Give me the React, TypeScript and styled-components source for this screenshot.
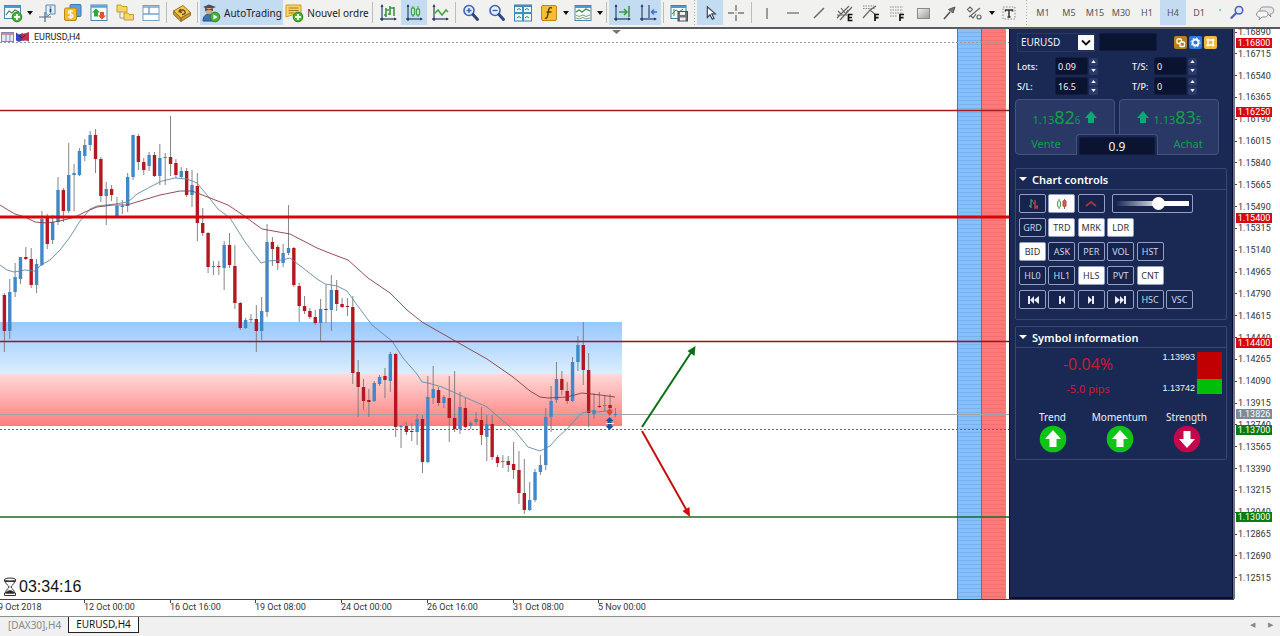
import React from "react";
import styled, { createGlobalStyle, css } from "styled-components";

const UI = '"Noto Sans", "Open Sans", sans-serif';
const SCALE = 'Roboto, "Liberation Sans", sans-serif';

const Global = createGlobalStyle`
  * { box-sizing: border-box; }
  body { margin: 0; background: #f0f0f0; font-family: ${UI}; color: #1c1c1c; }
  button, input, select { font-family: inherit; margin: 0; }
`;

/* ---------- market data ---------- */

type Candle = [kind: "u" | "d", high: number, top: number, bottom: number, low: number];

const CANDLES: Candle[] = [
  ["d", 293, 295, 331, 352], ["u", 279, 292, 331, 339], ["u", 263, 277, 292, 297], ["u", 257, 257, 279, 284],
  ["d", 247, 257, 259, 260], ["d", 248, 259, 285, 288], ["u", 259, 264, 285, 293], ["u", 211, 219, 265, 266],
  ["d", 214, 217, 244, 249], ["u", 215, 222, 240, 244], ["u", 177, 190, 222, 225], ["d", 188, 190, 211, 222],
  ["u", 143, 175, 211, 213], ["u", 164, 173, 175, 211], ["u", 148, 151, 175, 176], ["u", 139, 145, 156, 161],
  ["u", 131, 135, 145, 151], ["d", 129, 135, 159, 173], ["d", 157, 159, 196, 202], ["u", 182, 189, 196, 225],
  ["d", 185, 189, 195, 201], ["u", 197, 206, 216, 217], ["u", 200, 206, 207, 214], ["u", 173, 177, 206, 212],
  ["u", 135, 135, 177, 180], ["d", 134, 136, 162, 170], ["d", 158, 162, 170, 175], ["u", 152, 155, 166, 171],
  ["d", 152, 155, 176, 177], ["u", 144, 158, 176, 185], ["u", 153, 157, 158, 185], ["d", 116, 157, 164, 176],
  ["d", 159, 163, 175, 178], ["u", 167, 171, 177, 178], ["d", 168, 171, 195, 197], ["u", 170, 185, 195, 207],
  ["d", 173, 186, 223, 241], ["d", 208, 223, 233, 236], ["d", 232, 233, 267, 273], ["u", 261, 266, 267, 275],
  ["d", 261, 266, 267, 275], ["u", 241, 245, 268, 290], ["d", 233, 245, 265, 268], ["d", 245, 266, 303, 309],
  ["d", 302, 303, 328, 330], ["u", 318, 320, 328, 329], ["u", 314, 319, 320, 323], ["d", 305, 319, 331, 352],
  ["u", 297, 311, 331, 340], ["u", 224, 242, 312, 317], ["d", 237, 242, 249, 266], ["d", 245, 247, 263, 270],
  ["u", 244, 253, 263, 267], ["u", 205, 248, 253, 255], ["d", 247, 248, 285, 287], ["d", 283, 286, 306, 322],
  ["d", 296, 306, 311, 314], ["d", 308, 311, 317, 319], ["d", 310, 317, 323, 325], ["u", 299, 309, 323, 342],
  ["d", 285, 309, 310, 323], ["u", 275, 290, 310, 331], ["d", 280, 290, 304, 311], ["d", 298, 304, 307, 308],
  ["d", 298, 306, 307, 316], ["d", 296, 307, 373, 384], ["d", 360, 372, 387, 417], ["d", 379, 387, 401, 410],
  ["d", 389, 400, 402, 417], ["u", 381, 383, 401, 402], ["u", 375, 377, 384, 386], ["d", 368, 376, 380, 398],
  ["u", 352, 354, 381, 392], ["d", 353, 354, 427, 437], ["u", 425, 426, 427, 448], ["d", 422, 426, 432, 435],
  ["d", 423, 431, 432, 441], ["u", 414, 419, 432, 445], ["d", 415, 419, 462, 473], ["u", 376, 397, 462, 463],
  ["u", 366, 389, 398, 404], ["d", 387, 390, 403, 406], ["u", 395, 397, 403, 408], ["d", 376, 398, 418, 442],
  ["d", 371, 418, 429, 432], ["u", 392, 407, 429, 434], ["d", 398, 408, 427, 428], ["u", 421, 423, 426, 429],
  ["u", 412, 419, 422, 425], ["d", 407, 420, 435, 445], ["u", 415, 424, 437, 461], ["d", 415, 424, 457, 460],
  ["d", 455, 457, 463, 467], ["u", 455, 461, 462, 468], ["d", 456, 461, 465, 472], ["d", 442, 464, 470, 479],
  ["d", 451, 470, 493, 504], ["d", 459, 493, 510, 514], ["u", 482, 500, 510, 511], ["u", 469, 472, 500, 502],
  ["u", 455, 465, 472, 475], ["u", 408, 417, 465, 470], ["u", 386, 401, 417, 432], ["u", 362, 379, 400, 403],
  ["d", 371, 379, 390, 395], ["d", 382, 391, 401, 404], ["u", 357, 362, 401, 402], ["u", 336, 345, 362, 371],
  ["d", 322, 345, 370, 385], ["d", 353, 370, 413, 427], ["u", 393, 410, 414, 419], ["d", 392, 406, 407, 408],
  ["u", 395, 405, 406, 412], ["d", 394, 405, 408, 410], ["u", 408, 414, 415, 417],
];
const PITCH = 5.36;

const FAST_MA =
  "0,265 7,270 14,272 25,270 35,271 41,265 50,260 60,250 70,237 80,221 90,209 97,206 115,204 128,202 137,194 150,187 162,181 175,178 187,179 197,183 207,195 218,209 230,218 245,242 261,263 268,261 282,260 290,258 303,268 317,279 325,284 337,286 347,291 357,305 372,325 392,341 403,358 417,374 422,382 428,383 442,387 462,396 487,407 503,421 515,431 528,447 540,451 550,446 558,437 568,428 575,420 582,413 590,411 598,412 613,410";
const SLOW_MA =
  "0,205 8,210 15,214 25,217 35,222 47,223 60,221 75,217 85,212 97,207 113,205 127,205 140,201 160,195 180,191 192,191 205,196 228,205 240,213 262,229 290,234 317,248 332,254 348,260 368,278 390,293 407,310 422,322 457,342 487,359 513,377 530,391 540,397 548,398 567,397 582,393 600,395 615,397";

const TOP_PRICE = 1.1689;
const TICKS = Array.from({ length: 26 }, (_, i) => (TOP_PRICE - i * 0.00175).toFixed(5));
const LEVELS: { price: string; color: string }[] = [
  { price: "1.16800", color: "#d8090e" },
  { price: "1.16250", color: "#d8090e" },
  { price: "1.15400", color: "#d8090e" },
  { price: "1.14400", color: "#d8090e" },
  { price: "1.13826", color: "#7d8b99" },
  { price: "1.13700", color: "#087d0c" },
  { price: "1.13000", color: "#087d0c" },
];
const priceTop = (p: string) => Math.round(((TOP_PRICE - Number(p)) / 0.00175) * 21.84) - 2;
const TIMES = ["9 Oct 2018", "12 Oct 00:00", "16 Oct 16:00", "19 Oct 08:00", "24 Oct 00:00", "26 Oct 16:00", "31 Oct 08:00", "5 Nov 00:00"];

/* ---------- shell ---------- */

const Page = styled.div`
  min-height: 100vh;
  display: flex;
  flex-direction: column;
  background: #fff;
`;

const Toolbar = styled.header`
  display: flex;
  align-items: stretch;
  height: 29px;
  padding-bottom: 2px;
  background: #f1f1f0;
  border-bottom: 2px solid #5a5a60;
  white-space: nowrap;
  overflow: hidden;
`;

const ToolButton = styled.button<{ $active?: boolean; $wide?: number }>`
  flex: none;
  width: ${(p) => p.$wide ?? 26}px;
  display: flex;
  align-items: center;
  justify-content: center;
  gap: 3px;
  padding: 0;
  border: 0;
  font-size: 10px;
  color: #222;
  background: ${(p) => (p.$active ? "#c4dcf2" : "transparent")};
  svg { flex: none; display: block; }
`;

const PeriodButton = styled(ToolButton)`
  font-size: 9px;
  color: #555;
`;

const Caret = styled.button`
  flex: none;
  width: 8px;
  padding: 0;
  border: 0;
  background: none;
  display: flex;
  align-items: center;
  justify-content: center;
  &::after {
    content: "";
    border: 3px solid transparent;
    border-top: 4px solid #111;
    border-bottom: 0;
  }
`;

const Separator = styled.i`
  flex: none;
  width: 5px;
  margin: 2px 0;
  background: linear-gradient(#bcbcbc, #bcbcbc) center / 1px 100% no-repeat;
`;

const Grip = styled.i<{ $wide?: boolean }>`
  flex: none;
  width: ${(p) => (p.$wide ? 8 : 5)}px;
  background: repeating-linear-gradient(#aaa 0 1px, transparent 1px 3px) center / 1px 100% no-repeat;
`;

const ToolEnd = styled.div`
  display: flex;
  margin-left: auto;
`;

/* ---------- chart ---------- */

const Workspace = styled.main`
  display: flex;
  align-items: stretch;
`;

const Plot = styled.section`
  flex: 1;
  min-width: 0;
  position: relative;
  background: #fff;
`;

const PlotSvg = styled.svg`
  display: block;
  width: 100%;
  height: 570px;
`;

const Ladder = styled.rect<{ $end: number }>`
  x: calc(100% - ${(p) => p.$end}px);
`;

const ChartTitle = styled.div`
  position: absolute;
  top: 2px;
  left: 1px;
  display: flex;
  align-items: center;
  gap: 5px;
  font: 9px/12px ${SCALE};
`;

const Countdown = styled.time`
  position: absolute;
  left: 3px;
  bottom: 2px;
  display: flex;
  align-items: center;
  gap: 2px;
  font: 16px/18px "Liberation Sans", sans-serif;
  color: #111;
`;

const PriceScale = styled.aside`
  flex: none;
  width: 47px;
  position: relative;
  border-left: 2px solid #6d7489;
  font: 9px/10px ${SCALE};
  color: #333;
`;

const PriceList = styled.ul`
  list-style: none;
  margin: -2px 0 0;
  padding: 0 0 16px;
  height: calc(100% + 2px);
  display: flex;
  flex-direction: column;
  justify-content: space-between;
  li { display: flex; align-items: center; gap: 1px; }
  li::before { content: ""; width: 2px; height: 1px; background: #444; }
`;

const LevelTag = styled.span`
  position: absolute;
  left: 1px;
  width: 36px;
  height: 10px;
  text-align: center;
  color: #fff;
`;

const TimeScale = styled.div`
  height: 17px;
  margin-right: 46px;
  border-top: 1px solid #444;
  svg { display: block; width: 100%; height: 16px; }
  text { font: 9px ${SCALE}; fill: #333; }
`;

const TabBar = styled.nav`
  flex: 1;
  min-height: 20px;
  display: flex;
  align-items: flex-start;
  padding-left: 1px;
  background: #f0f0f1;
  border-top: 1px solid #8c8c8c;
`;

const Tab = styled.button<{ $active?: boolean }>`
  height: 16px;
  padding: 0 7px;
  border: 0;
  font-size: 10px;
  line-height: 15px;
  background: none;
  color: #8a8a8a;
  ${(p) =>
    p.$active &&
    css`
      background: #fff;
      color: #111;
      border: 1px solid #222;
      border-top: 0;
    `}
`;

const TabScroll = styled.div`
  margin-left: auto;
  display: flex;
  gap: 6px;
  padding: 2px 4px;
  button { border: 0; background: none; padding: 0; width: 12px; font-size: 7px; line-height: 12px; color: #888; }
`;

/* ---------- trade panel ---------- */

const Panel = styled.aside`
  flex: none;
  width: 224px;
  padding: 3px 5px 0;
  display: flex;
  flex-direction: column;
  background: #1a2854;
  border: 1px solid #060c33;
  border-top-width: 0;
  border-bottom-width: 2px;
  color: #eef1fa;
`;

const SymbolRow = styled.div`
  display: flex;
  align-items: center;
  gap: 4px;
  height: 20px;
  padding-left: 2px;
`;

const SymbolBox = styled.label`
  position: relative;
  width: 78px;
  height: 19px;
  border: 1px solid #2a3866;
  display: flex;
  svg { position: absolute; right: 0; top: 1px; pointer-events: none; }
`;

const SymbolSelect = styled.select`
  appearance: none;
  width: 100%;
  padding: 0 0 0 3px;
  border: 0;
  background: transparent;
  color: #f3f5fb;
  font-size: 10px;
`;

const DarkInput = styled.input<{ $w: number }>`
  width: ${(p) => p.$w}px;
  height: 18px;
  padding: 0 2px;
  border: 1px solid #111c40;
  border-radius: 2px;
  background: #0a1430;
  color: #f3f5fb;
  font-size: 9px;
`;

const QuickIcons = styled.div`
  display: flex;
  gap: 2px;
  margin-left: auto;
  margin-right: 10px;
  button { width: 13px; height: 13px; padding: 0; border: 0; background: none; }
  svg { display: block; }
`;

const Fields = styled.div`
  display: grid;
  grid-template-columns: 115px 1fr;
  grid-auto-rows: 20px;
  padding: 4px 0 0 2px;
`;

const Field = styled.label<{ $label: number }>`
  display: grid;
  grid-template-columns: ${(p) => p.$label}px 33px 11px;
  align-items: center;
  font-size: 9px;
  font-weight: 500;
`;

const Spin = styled.span`
  display: grid;
  gap: 1px;
  margin-left: 1px;
  button {
    height: 8px;
    width: 9px;
    padding: 0;
    border: 0;
    border-radius: 2px;
    background: #2c3a69;
    display: grid;
    place-items: center;
  }
  svg { display: block; }
`;

const Deal = styled.div`
  position: relative;
  display: flex;
  gap: 4px;
  margin-top: 3px;
`;

const DealButton = styled.button<{ $side: "left" | "right" }>`
  width: 100px;
  height: 56px;
  padding: 0;
  border: 1px solid #45547f;
  border-radius: 4px;
  background: #293865;
  color: #10a045;
  display: flex;
  flex-direction: column;
  text-align: center;
`;

const Quote = styled.span`
  height: 34px;
  width: 100%;
  display: flex;
  align-items: center;
  justify-content: center;
  gap: 3px;
  font-size: 11px;
  b { font-size: 18px; font-weight: 400; }
  small { font-size: 10px; }
`;

const DealName = styled.span<{ $side: "left" | "right" }>`
  width: 60px;
  font-size: 11px;
  line-height: 19px;
  margin-left: ${(p) => (p.$side === "left" ? 0 : 38)}px;
`;

const LotBox = styled.div`
  position: absolute;
  left: 61px;
  top: 35px;
  width: 82px;
  height: 21px;
  padding: 2px;
  border: 1px solid #45547f;
  border-bottom: 0;
  border-radius: 4px 4px 0 0;
  background: #1a2854;
  display: flex;
  input { width: 100%; text-align: center; font-size: 12px; }
`;

const Group = styled.section<{ $h: number; $gap: number }>`
  width: 212px;
  min-height: ${(p) => p.$h}px;
  margin-top: ${(p) => p.$gap}px;
  border: 1px solid #384876;
  border-radius: 2px;
`;

const GroupTitle = styled.h2`
  margin: 0;
  height: 21px;
  padding-left: 3px;
  border-bottom: 1px solid #384876;
  display: flex;
  align-items: center;
  gap: 5px;
  font-size: 11px;
  font-weight: 600;
  color: #fff;
  &::before {
    content: "";
    border: 4px solid transparent;
    border-top: 4px solid #fff;
    border-bottom: 0;
  }
`;

const Controls = styled.div`
  display: grid;
  grid-template-columns: repeat(6, 27px);
  grid-auto-rows: 19px;
  justify-content: space-between;
  row-gap: 5px;
  width: 180px;
  padding: 4px 3px;
`;

const Toggle = styled.button<{ $on?: boolean; $first?: boolean }>`
  ${(p) => p.$first && "grid-column-start: 1;"}
  display: grid;
  place-items: center;
  padding: 0;
  border: 1px solid #93a0c4;
  border-radius: 2px;
  font-size: 9px;
  background: ${(p) => (p.$on ? "#fdfdfe" : "#16234d")};
  color: ${(p) => (p.$on ? "#333" : "#cfd7ea")};
  svg { display: block; }
`;

const ZoomSlider = styled.label`
  grid-column: 4 / span 3;
  margin-left: 5px;
  border: 1px solid #93a0c4;
  border-radius: 2px;
  padding: 0 3px;
  display: flex;
  align-items: center;
  background: #16234d;
  input {
    appearance: none;
    width: 100%;
    height: 5px;
    background: linear-gradient(90deg, #1a2854, #fff 65%);
  }
  input::-webkit-slider-thumb {
    appearance: none;
    width: 13px;
    height: 13px;
    border-radius: 50%;
    background: #fff;
  }
`;

const Change = styled.div`
  display: flex;
  justify-content: space-between;
  padding: 4px 4px 0 0;
`;

const ChangeText = styled.div`
  width: 144px;
  display: grid;
  grid-template-rows: 24px 24px;
  align-items: center;
  text-align: center;
  color: #c61d35;
  font-size: 11px;
  strong { font-size: 16px; font-weight: 400; }
`;

const RangeBar = styled.div`
  display: flex;
  gap: 2px;
  height: 42px;
  font: 9px/11px "Liberation Sans", sans-serif;
  div { display: flex; flex-direction: column; justify-content: space-between; }
  i { width: 25px; background: linear-gradient(#c00000 65%, #00bd05 65%); }
`;

const Signals = styled.div`
  display: grid;
  grid-template-columns: repeat(3, 67px);
  padding: 10px 0 0 3px;
  font-size: 10px;
  line-height: 15px;
  div { display: grid; justify-items: center; }
  svg { display: block; }
`;

/* ---------- icons ---------- */

const Ico = ({ children, s = 20 }: { children: React.ReactNode; s?: number }) => (
  <svg width={s} height={s} viewBox="0 0 20 20" fill="none" aria-hidden="true">{children}</svg>
);
const Axes = () => (
  <g stroke="#4a5c82" strokeWidth="1.4" fill="#2b3e78">
    <path d="M4 2v16M2 16h16" />
    <path d="M4 1l-1.5 3h3zM19 16l-3-1.5v3z" stroke="none" />
    <circle cx="4" cy="16" r="1.2" stroke="none" />
  </g>
);
const Plus = ({ x = 14, y = 14 }) => (
  <g>
    <circle cx={x} cy={y} r="4.8" fill="#4bb436" stroke="#2e7f26" />
    <path d={`M${x - 3} ${y}h6M${x} ${y - 3}v6`} stroke="#fff" strokeWidth="1.8" />
  </g>
);
const Lens = ({ plus }: { plus: boolean }) => (
  <Ico>
    <circle cx="8" cy="7.500" r="5" fill="#e4f0fb" stroke="#3d63ae" strokeWidth="1.6" />
    <path d={plus ? "M5.500 7.500h5M8 5v5" : "M5.500 7.500h5"} stroke="#3d63ae" strokeWidth="1.4" />
    <path d="M12 11.500l4.500 5" stroke="#2c4684" strokeWidth="3" strokeLinecap="round" />
  </Ico>
);

const I = {
  newChart: (
    <Ico>
      <rect x="1.500" y="2.500" width="16" height="13" fill="#f4fafd" stroke="#4d86ad" />
      <path d="M1.500 4h16" stroke="#4d9ad0" strokeWidth="2" />
      <path d="M3 12l3-4 3 2 3-3 4 2" stroke="#4a8a4a" strokeWidth="1.2" />
      <Plus />
    </Ico>
  ),
  cross: (
    <Ico>
      <path d="M2 14h12M8 9v10" stroke="#56687c" strokeWidth="1.2" />
      <path d="M9 2h9v9h-5l-3 3v-3H9z" fill="#e6f1fb" stroke="#5286b8" />
      <path d="M13.500 5.500v4M13.500 3.500v1" stroke="#234f8a" strokeWidth="1.8" />
    </Ico>
  ),
  market: (
    <Ico>
      <rect x="7" y="1.500" width="11" height="12" rx="1" fill="#5f9fdb" stroke="#3d77b5" />
      <rect x="1.500" y="5" width="12" height="12.500" rx="1.500" fill="#f2bf2c" stroke="#bd8412" />
      <path d="M10 8.500c-2-1.500-5-1-4.500 1 .5 1.500 4 1.500 4.500 3 .3 2-3 2.500-5 1M7.600 7v9" stroke="#fff" strokeWidth="1.300" />
    </Ico>
  ),
  navigator: (
    <Ico>
      <rect x="2" y="2" width="16" height="15.500" fill="#f4fafd" stroke="#4d86ad" />
      <path d="M2 3.500h16" stroke="#5aa3d8" strokeWidth="2.500" />
      <path d="M7 5.500l4 4H9v4H5v-4H3z" fill="#2fa83a" />
      <path d="M13 16.500l4-4h-2V9h-4v3.500H9z" fill="#e2502a" />
    </Ico>
  ),
  folders: (
    <Ico>
      <path d="M5 8v7h5" stroke="#999" />
      <path d="M2 2h4l1 1.500h5V9H2zM9 10h4l1 1.500h4.500V17H9z" fill="#f6d566" stroke="#c79e2a" />
    </Ico>
  ),
  terminal: (
    <Ico>
      <rect x="2" y="2.500" width="16" height="15" fill="#fbfdff" stroke="#78a2cc" />
      <path d="M2 4h16M2 11h16M8 4v7" stroke="#78a2cc" strokeWidth="1.500" />
    </Ico>
  ),
  editor: (
    <Ico>
      <path d="M1.500 8L11 2.500l7.500 7L9 15z" fill="#f0c850" stroke="#96702a" />
      <path d="M1.500 8v3.500L9 18.500V15zM9 18.500l9.500-6v-3L9 15z" fill="#c99a34" stroke="#96702a" />
      <path d="M7 8.500c2-2 5-2 6 0s-1 3-3 3M8.500 6L7 8.500l3 1" stroke="#6a4a12" strokeWidth="1.400" />
    </Ico>
  ),
  auto: (
    <Ico>
      <path d="M2 18c0-5 3-7 6-7s6 2 6 7z" fill="#3c73b8" stroke="#284c80" />
      <circle cx="8" cy="7.500" r="3.800" fill="#d9a878" />
      <path d="M2 4l6-2.500L15 4 8 6.500zM4 5v3c2-1.500 6-1.500 8 0V5" fill="#4a4d54" />
      <circle cx="14" cy="14" r="4.800" fill="#4bb436" stroke="#2e7f26" />
      <path d="M12.500 11.500l4 2.500-4 2.500z" fill="#fff" />
    </Ico>
  ),
  order: (
    <Ico>
      <path d="M2 2h15v10H8l-6 2z" fill="#f7d664" stroke="#c99a26" />
      <path d="M4.500 5h10M4.500 7.500h10M4.500 10h6" stroke="#a67a1a" />
      <Plus />
    </Ico>
  ),
  bars: (
    <Ico><Axes /><path d="M8 5v9M6 12h2M8 7h3M12 3v9M10 11h2M12 5h4M16 4v9" stroke="#3a9a3a" strokeWidth="1.600" /></Ico>
  ),
  candles: (
    <Ico><Axes /><path d="M9 3v11M14 3v11" stroke="#3fa648" /><rect x="7.500" y="5" width="3" height="7" rx="1" fill="#d9f5da" stroke="#3fa648" strokeWidth="1.300" /><rect x="12.500" y="6" width="3" height="6" rx="1" fill="#d9f5da" stroke="#3fa648" strokeWidth="1.300" /></Ico>
  ),
  line: (<Ico><Axes /><path d="M4 11l4-4 4 5 4-5 2 2" stroke="#4aa63c" strokeWidth="1.600" /></Ico>),
  tile: (
    <Ico>
      <rect x="1.500" y="2" width="17" height="16" fill="#eaf6fc" stroke="#3f82ad" />
      <path d="M10 2v16M1.500 10h17M2 3h16" stroke="#3f8ec4" strokeWidth="2" />
      <path d="M4 7l2-1.500L8 7M12 7l2-1.500L16 7M4 15l2-1.500L8 15M12 15l2-1.500 2 1.500" stroke="#3b8c4c" />
    </Ico>
  ),
  fn: (
    <Ico>
      <rect x="2.500" y="2.500" width="15" height="15" rx="1.500" fill="#f5bf31" stroke="#c28516" />
      <path d="M13 5c-2-1-3 0-3.300 2L8.500 13c-.3 2-1.300 2.500-2.500 2M7.500 9h5" stroke="#5b3c05" strokeWidth="1.400" />
    </Ico>
  ),
  template: (
    <Ico>
      <rect x="2" y="2.500" width="16" height="15" fill="#f4faf8" stroke="#4d86ad" />
      <path d="M2 4h16" stroke="#4d9ad0" strokeWidth="2" />
      <path d="M3 9l3-2 3 2 4-3 4 2" stroke="#3b8c4c" strokeWidth="1.300" />
      <path d="M3 12l3 1.500L10 12l3 1.500L17 12M3 15l3 1 4-1.500 3 1.500 4-1" stroke="#7d9c84" />
    </Ico>
  ),
  scroll: (<Ico><Axes /><path d="M7 9h8M12 6l3 3-3 3M17 3v11" stroke="#3d9a4a" strokeWidth="1.600" /></Ico>),
  shift: (<Ico><Axes /><path d="M11 2v13" stroke="#4a5c82" strokeWidth="1.400" /><path d="M19 9h-5M16 6.500L13.500 9l2.500 2.500" stroke="#3f6fc0" strokeWidth="1.500" /></Ico>),
  save: (
    <Ico>
      <rect x="2" y="2.500" width="15" height="13" fill="#f4faf8" stroke="#3f82ad" />
      <path d="M2 4h15" stroke="#4d9ad0" strokeWidth="2" />
      <path d="M5 6v7M3 11l4-4 3 2 4-3" stroke="#3b8c4c" />
      <rect x="9" y="8.500" width="9.500" height="9.500" fill="#6f747a" stroke="#4c5055" />
      <path d="M11 9h5v3h-5zM11 14.500h5.500v3H11z" fill="#f0f0f0" />
    </Ico>
  ),
  cursor: (<Ico s={18}><path d="M7 3v12l3-3 2.500 5 2-1-2.500-5h4z" fill="#fff" stroke="#38435a" strokeWidth="1.300" /></Ico>),
  crosshair: (<Ico><path d="M2 10h6M12 10h6M10 2v6M10 12v6" stroke="#777" strokeWidth="1.400" /><path d="M9.500 10h1" stroke="#777" /></Ico>),
  vline: (<Ico><path d="M10 5v11" stroke="#777" strokeWidth="1.400" /></Ico>),
  hline: (<Ico><path d="M4 10h12" stroke="#777" strokeWidth="1.400" /></Ico>),
  trend: (<Ico><path d="M5 15L15 5" stroke="#666" strokeWidth="1.400" /></Ico>),
  equi: (
    <Ico>
      <path d="M2 15L14 3M5 17L17 4M3 8l3 3M6 5l4 5M9 13l4-6M2 12h10" stroke="#666" strokeWidth="1.200" />
      <path d="M17.500 11.500h-4v6h4M13.500 14.500h3.500" stroke="#111" strokeWidth="1.700" />
    </Ico>
  ),
  fan: (
    <Ico>
      <path d="M2 3h12M2 5.500h12" stroke="#888" strokeDasharray="1.500 1" />
      <path d="M2 15L9 7l6 5M9 7l6-4" stroke="#666" strokeWidth="1.200" />
      <path d="M18 11.500h-4v6.500M14 14.700h3.500" stroke="#111" strokeWidth="1.700" />
    </Ico>
  ),
  fibo: (
    <Ico>
      <path d="M3 4h13M3 7h13M3 10h13M3 13h7" stroke="#888" strokeDasharray="1.500 1" />
      <path d="M17 11.500h-4v6.500M13 14.700h3.500" stroke="#111" strokeWidth="1.700" />
    </Ico>
  ),
  rect: (
    <Ico>
      <defs><linearGradient id="shade" x2="1" y2="1"><stop stopColor="#f2f2f2" /><stop offset="1" stopColor="#999" /></linearGradient></defs>
      <rect x="4.500" y="5.500" width="12" height="10" fill="url(#shade)" stroke="#8a8a8a" />
    </Ico>
  ),
  arrow: (<Ico><path d="M5 16l6-7" stroke="#555" strokeWidth="1.600" /><path d="M16 4l-2 6-4.500-3.500z" fill="#777" stroke="#555" /></Ico>),
  symbols: (<Ico><path d="M4 14L15 5M5 4l2.500 2.500L5 9 2.500 6.500zM6 13l2 2 3-4" stroke="#666" strokeWidth="1.200" /><circle cx="14" cy="14" r="2" stroke="#666" strokeWidth="1.200" /></Ico>),
  text: (
    <Ico>
      <rect x="4" y="4" width="12" height="12" stroke="#888" strokeDasharray="1.500 1.500" />
      <path d="M6.500 8.500V7h7v1.500M10 7v7M8.500 14h3" stroke="#333" strokeWidth="1.500" />
    </Ico>
  ),
  search: (<Ico s={15}><circle cx="12" cy="7" r="5" fill="#dfe8f8" stroke="#4a5fc0" strokeWidth="2" /><path d="M8 11l-6 6" stroke="#4a5fc0" strokeWidth="3" strokeLinecap="round" /></Ico>),
  chat: (
    <Ico>
      <path d="M8 4h7c5 0 5 7 0 7l1 3-3-3H8c-4 0-4-7 0-7z" fill="#e9e9e9" stroke="#8d939c" />
      <path d="M5 8h5c4 0 4 6 0 6H7l-3 3 .5-3C0 14 1 8 5 8z" fill="#f6f6f6" stroke="#8d939c" />
    </Ico>
  ),
};

const TealUp = () => (
  <svg width="14" height="14" viewBox="0 0 14 14"><path d="M7 1l6 7h-3v5H4V8H1z" fill="#10a574" /></svg>
);
const Signal = ({ down }: { down?: boolean }) => (
  <svg width="28" height="28" viewBox="0 0 28 28">
    <circle cx="14" cy="14" r="13.300" fill={down ? "#c4064b" : "#0fc414"} />
    <path transform={down ? "rotate(180 14 14)" : undefined} d="M14 5l8 9h-4.500v8h-7v-8H6z" fill="#fff" />
  </svg>
);
const Step = ({ d }: { d: string }) => (
  <svg width="16" height="12" viewBox="0 0 16 12"><path d={d} fill="#e8ecf7" /></svg>
);
const Nub = ({ down }: { down?: boolean }) => (
  <svg width="5" height="3" viewBox="0 0 6 4"><path d={down ? "M0 0h6L3 4z" : "M0 4h6L3 0z"} fill="#eef1fa" /></svg>
);

const Tool = ({ icon, label, active }: { icon: React.ReactNode; label: string; active?: boolean }) => (
  <ToolButton type="button" aria-label={label} $active={active}>{icon}</ToolButton>
);

const NumberField = ({ label, value, w }: { label: string; value: string; w: number }) => (
  <Field $label={w}>
    {label}
    <DarkInput $w={33} defaultValue={value} />
    <Spin>
      <button type="button" aria-label={`${label} up`}><Nub /></button>
      <button type="button" aria-label={`${label} down`}><Nub down /></button>
    </Spin>
  </Field>
);

const TOGGLES: { t: string; on?: boolean; first?: boolean }[] = [
  { t: "GRD", first: true }, { t: "TRD", on: true }, { t: "MRK", on: true }, { t: "LDR", on: true },
  { t: "BID", on: true, first: true }, { t: "ASK" }, { t: "PER" }, { t: "VOL" }, { t: "HST" },
  { t: "HL0", first: true }, { t: "HL1" }, { t: "HLS", on: true }, { t: "PVT" }, { t: "CNT", on: true },
];

const TopBar = () => (
  <Toolbar>
    <Tool icon={I.newChart} label="New chart" /><Caret aria-label="Chart list" />
    <Tool icon={I.cross} label="Data window" />
    <Tool icon={I.market} label="Market watch" />
    <Tool icon={I.navigator} label="Trade" />
    <Tool icon={I.folders} label="Navigator" />
    <Tool icon={I.terminal} label="Terminal" />
    <Separator />
    <Tool icon={I.editor} label="Editor" />
    <Separator />
    <ToolButton type="button" $active $wide={83}>{I.auto}AutoTrading</ToolButton>
    <ToolButton type="button" $wide={87}>{I.order}Nouvel ordre</ToolButton>
    <Separator />
    <Tool icon={I.bars} label="Bar chart" />
    <Tool icon={I.candles} label="Candlesticks" active />
    <Tool icon={I.line} label="Line chart" />
    <Separator />
    <Tool icon={<Lens plus />} label="Zoom in" />
    <Tool icon={<Lens plus={false} />} label="Zoom out" />
    <Tool icon={I.tile} label="Tile windows" />
    <Tool icon={I.fn} label="Indicators" /><Caret aria-label="Indicator list" />
    <Tool icon={I.template} label="Templates" /><Caret aria-label="Template list" />
    <Separator />
    <Tool icon={I.scroll} label="Auto scroll" active />
    <Tool icon={I.shift} label="Chart shift" active />
    <Separator />
    <Tool icon={I.save} label="Save chart" />
    <Grip />
    <Tool icon={I.cursor} label="Cursor" active />
    <Tool icon={I.crosshair} label="Crosshair" />
    <Separator />
    <Tool icon={I.vline} label="Vertical line" />
    <Tool icon={I.hline} label="Horizontal line" />
    <Tool icon={I.trend} label="Trendline" />
    <Tool icon={I.equi} label="Channel" />
    <Tool icon={I.fan} label="Fibonacci fan" />
    <Tool icon={I.fibo} label="Fibonacci" />
    <Tool icon={I.rect} label="Rectangle" />
    <Tool icon={I.arrow} label="Arrow" />
    <Tool icon={I.symbols} label="Symbols" /><Caret aria-label="Symbol list" />
    <Tool icon={I.text} label="Text" />
    <Grip $wide />
    {["M1", "M5", "M15", "M30", "H1", "H4", "D1"].map((p) => (
      <PeriodButton type="button" key={p} $active={p === "H4"}>{p}</PeriodButton>
    ))}
    <ToolEnd>
      <PeriodButton type="button" $wide={8}>'</PeriodButton>
      <Tool icon={I.search} label="Search" />
      <ToolButton type="button" aria-label="Chat" $wide={30}>{I.chat}</ToolButton>
    </ToolEnd>
  </Toolbar>
);

const Chart = () => (
  <Plot>
    <PlotSvg role="img" aria-label="EURUSD H4 price chart">
      <defs>
        <linearGradient id="zone" x2="0" y2="1">
          <stop stopColor="#97c8fe" />
          <stop offset=".5" stopColor="#dceefe" />
          <stop offset=".5" stopColor="#ffdad9" />
          <stop offset="1" stopColor="#fd7c7c" />
        </linearGradient>
        <pattern id="bid" width="24" height="4" patternUnits="userSpaceOnUse">
          <rect width="24" height="4" fill="#87c1fd" /><rect width="24" height="1" fill="#78b1ec" />
        </pattern>
        <pattern id="ask" width="24" height="4" patternUnits="userSpaceOnUse">
          <rect width="24" height="4" fill="#fe7979" /><rect width="24" height="1" fill="#f17071" />
        </pattern>
      </defs>
      <g transform="translate(0 -29)" shapeRendering="crispEdges">
        <rect y="322" width="622" height="104" fill="url(#zone)" />
        <Ladder $end={52} y="29" width="25" height="571" fill="url(#bid)" />
        <Ladder $end={27} y="29" width="24" height="571" fill="url(#ask)" />
        <Ladder $end={52} y="29" width="1" height="571" fill="#56789c" />
        <Ladder $end={28} y="29" width="1" height="571" fill="#7c6d7c" />
        <line x2="100%" y1="42.500" y2="42.500" stroke="#999" strokeDasharray="2 2" />
        <line x2="100%" y1="414" y2="414" stroke="#a3a3a3" />
        <line x2="100%" y1="429.500" y2="429.500" stroke="#4d7358" strokeDasharray="2 2" />
      </g>
      <g transform="translate(0 -29)">
        {CANDLES.map(([kind, high, top, bottom, low], i) => {
          const x = 4.4 + i * PITCH;
          return (
            <g key={i}>
              <line x1={x} x2={x} y1={high} y2={low} stroke="#777" strokeWidth=".9" />
              <rect x={x - 1.7} y={top} width="3.400" height={Math.max(bottom - top, 1)} fill={kind === "u" ? "#4288c8" : "#b31820"} />
            </g>
          );
        })}
        <polyline points={FAST_MA} fill="none" stroke="#5f8ba6" strokeWidth=".9" />
        <polyline points={SLOW_MA} fill="none" stroke="#8b3a45" strokeWidth=".9" />
        <line x2="100%" y1="110.500" y2="110.500" stroke="#a31a20" strokeWidth="1.500" />
        <line x2="100%" y1="217" y2="217" stroke="#d4060b" strokeWidth="3" />
        <line x2="100%" y1="341.500" y2="341.500" stroke="#a3101e" strokeWidth="1.500" />
        <line x2="100%" y1="517" y2="517" stroke="#1b6b23" strokeWidth="1.500" />
        <path d="M642 427L692 351" stroke="#0a6f14" strokeWidth="2" />
        <path d="M695.500 346l-1 10-7-5z" fill="#0a6f14" />
        <path d="M642 431l45 80" stroke="#c40d0d" strokeWidth="2" />
        <path d="M690 517l-7.500-6 7-4z" fill="#dd0707" />
        <path d="M612 30h9l-4.500 4z" fill="#777" />
        <path d="M609.600 408l3 4-3 4-3-4z" fill="#e04a2c" />
        <path d="M609.600 417l4 4h-2v5h2l-4 4-4-4h2v-5h-2z" fill="#1d569b" />
        <path d="M606 423.500h8" stroke="#e9f2ff" />
      </g>
    </PlotSvg>
    <ChartTitle>
      <svg width="28" height="12" viewBox="0 0 28 12" aria-hidden="true">
        <rect x=".5" y="1.500" width="12" height="9" fill="#e9e6f6" stroke="#8a83b8" />
        <path d="M1 3h11" stroke="#d76767" strokeWidth="1.500" />
        <path d="M5 3v7M9 3v7" stroke="#7f90d0" />
        <path d="M15 1.500l3 2 4-1.500v7l-4 2-3-1.500z" fill="#3844c0" />
        <path d="M28 1l-3 1-4 1v7l4-.5 3 1z" fill="#b8344c" />
        <path d="M18 4l3 3 3-3" stroke="#2a2560" fill="none" />
      </svg>
      EURUSD,H4
    </ChartTitle>
    <Countdown>
      <svg width="14" height="20" viewBox="0 0 14 20" fill="none" stroke="#333" aria-hidden="true">
        <ellipse cx="7" cy="2.500" rx="5.500" ry="1.500" />
        <path d="M1.500 2.500v2h11v-2M2.500 4.500c0 3 3.500 4 3.500 5.500S2.500 12.500 2.500 16M11.500 4.500c0 3-3.500 4-3.500 5.500s3.500 2.500 3.500 6" />
        <path d="M1.500 16h11v2.500h-11z" />
        <path d="M3 16c1-3 7-3 8 0z" fill="#222" />
      </svg>
      03:34:16
    </Countdown>
  </Plot>
);

const TradePanel = () => (
  <Panel>
    <SymbolRow>
      <SymbolBox>
        <SymbolSelect aria-label="Symbol" defaultValue="EURUSD"><option>EURUSD</option></SymbolSelect>
        <svg width="16" height="15" viewBox="0 0 16 15">
          <rect width="16" height="15" fill="#fafafa" />
          <path d="M4 5.500l4 4 4-4" fill="none" stroke="#111" strokeWidth="1.800" />
        </svg>
      </SymbolBox>
      <DarkInput $w={58} aria-label="Note" />
      <QuickIcons>
        <button type="button" aria-label="Link charts">
          <svg width="13" height="13" viewBox="0 0 13 13"><rect width="13" height="13" rx="2" fill="#b5811b" /><rect x="3" y="3" width="4.500" height="4.500" rx="1" fill="none" stroke="#fff" strokeWidth="1.300" /><rect x="6" y="6" width="4.500" height="4.500" rx="1" fill="#b5811b" stroke="#fff" strokeWidth="1.300" /></svg>
        </button>
        <button type="button" aria-label="Settings">
          <svg width="13" height="13" viewBox="0 0 13 13"><rect width="13" height="13" rx="2" fill="#2f7ad9" /><circle cx="6.500" cy="6.500" r="3" fill="none" stroke="#fff" strokeWidth="1.800" /><circle cx="6.500" cy="6.500" r="4.500" fill="none" stroke="#fff" strokeDasharray="1.700 1.830" /></svg>
        </button>
        <button type="button" aria-label="Resize">
          <svg width="13" height="13" viewBox="0 0 13 13"><rect width="13" height="13" rx="2" fill="#f0b83c" /><rect x="4" y="4" width="5" height="5" fill="none" stroke="#fff" strokeWidth="1.500" /><path d="M2.500 4h2M8.500 4h2M2.500 9h2M8.500 9h2M4 2.500v2M9 2.500v2M4 8.500v2M9 8.500v2" stroke="#fff" strokeWidth="1.500" /></svg>
        </button>
      </QuickIcons>
    </SymbolRow>
    <Fields>
      <NumberField label="Lots:" value="0.09" w={38} />
      <NumberField label="T/S:" value="0" w={22} />
      <NumberField label="S/L:" value="16.5" w={38} />
      <NumberField label="T/P:" value="0" w={22} />
    </Fields>
    <Deal>
      <DealButton type="button" $side="left">
        <Quote><span>1.13<b>82</b><small>6</small></span><TealUp /></Quote>
        <DealName $side="left">Vente</DealName>
      </DealButton>
      <DealButton type="button" $side="right">
        <Quote><TealUp /><span>1.13<b>83</b><small>5</small></span></Quote>
        <DealName $side="right">Achat</DealName>
      </DealButton>
      <LotBox><DarkInput $w={76} aria-label="Volume" defaultValue="0.9" /></LotBox>
    </Deal>
    <Group $h={152} $gap={13}>
      <GroupTitle>Chart controls</GroupTitle>
      <Controls>
        <Toggle type="button" aria-label="Bars">
          <svg width="12" height="12" viewBox="0 0 12 12" fill="none"><path d="M4 1v9M2 8h2M4 3h2" stroke="#3b9a6a" strokeWidth="1.300" /><path d="M8 2v9M6 5h2M8 9h3M10 7v4" stroke="#cf3b44" strokeWidth="1.300" /></svg>
        </Toggle>
        <Toggle type="button" aria-label="Candles" $on>
          <svg width="12" height="12" viewBox="0 0 12 12"><rect x="1.500" y="3" width="3" height="6" rx="1" fill="#e4f5e6" stroke="#4aa257" /><rect x="7" y="2.500" width="3" height="6" rx="1" fill="#e65a5a" stroke="#c8333a" /><path d="M3 1v2M3 9v2M8.500 1v1.500M8.500 8.500V11" stroke="#777" /></svg>
        </Toggle>
        <Toggle type="button" aria-label="Line">
          <svg width="12" height="8" viewBox="0 0 12 8" fill="none"><path d="M1 6l5-4 5 4" stroke="#a8343f" strokeWidth="1.800" /></svg>
        </Toggle>
        <ZoomSlider><input type="range" aria-label="Zoom" min="0" max="100" defaultValue="60" /></ZoomSlider>
        {TOGGLES.map((b) => (
          <Toggle type="button" key={b.t} $on={b.on} $first={b.first}>{b.t}</Toggle>
        ))}
        <Toggle type="button" aria-label="First" $first><Step d="M3 2h2v8H3zM9 2v8L5 6zM14 2v8l-5-4z" /></Toggle>
        <Toggle type="button" aria-label="Previous"><Step d="M5 2h2v8H5zM11 2v8L7 6z" /></Toggle>
        <Toggle type="button" aria-label="Next"><Step d="M9 2h2v8H9zM5 2v8l4-4z" /></Toggle>
        <Toggle type="button" aria-label="Last"><Step d="M11 2h2v8h-2zM7 2v8l4-4zM2 2v8l5-4z" /></Toggle>
        <Toggle type="button">HSC</Toggle>
        <Toggle type="button">VSC</Toggle>
      </Controls>
    </Group>
    <Group $h={134} $gap={6}>
      <GroupTitle>Symbol information</GroupTitle>
      <Change>
        <ChangeText><strong>-0.04%</strong><span>-5.0 pips</span></ChangeText>
        <RangeBar><div><span>1.13993</span><span>1.13742</span></div><i /></RangeBar>
      </Change>
      <Signals>
        <div>Trend<Signal /></div>
        <div>Momentum<Signal /></div>
        <div>Strength<Signal down /></div>
      </Signals>
    </Group>
  </Panel>
);

export default function App() {
  return (
    <Page>
      <Global />
      <TopBar />
      <Workspace>
        <Chart />
        <TradePanel />
        <PriceScale>
          <PriceList>{TICKS.map((t) => <li key={t}>{t}</li>)}</PriceList>
          {LEVELS.map((l) => (
            <LevelTag key={l.price} style={{ top: priceTop(l.price), background: l.color }}>{l.price}</LevelTag>
          ))}
        </PriceScale>
      </Workspace>
      <TimeScale>
        <svg role="img" aria-label="Time scale">
          {TIMES.map((t, i) => {
            const x = Math.round(i * 16 * PITCH) - 2;
            return (
              <g key={t}>
                <path d={`M${x + 0.5} 0v3`} stroke="#444" />
                <text x={x} y="10">{t}</text>
              </g>
            );
          })}
        </svg>
      </TimeScale>
      <TabBar>
        <Tab type="button">[DAX30],H4</Tab>
        <Tab type="button" $active>EURUSD,H4</Tab>
        <TabScroll>
          <button type="button" aria-label="Scroll left">◀</button>
          <button type="button" aria-label="Scroll right">▶</button>
        </TabScroll>
      </TabBar>
    </Page>
  );
}
